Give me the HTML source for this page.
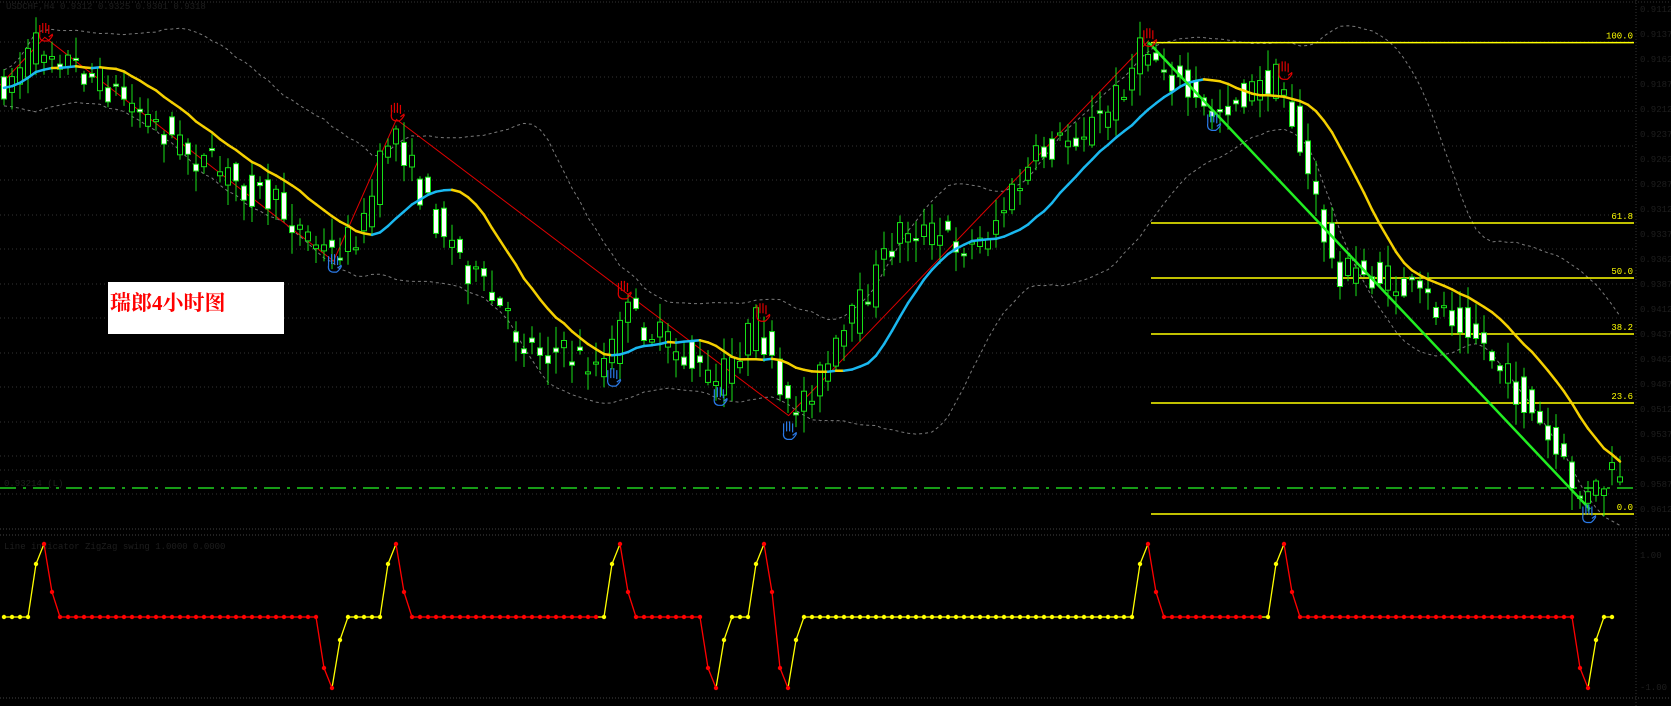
<!DOCTYPE html>
<html><head><meta charset="utf-8">
<style>
html,body{margin:0;padding:0;background:#000;width:1671px;height:706px;overflow:hidden}
#c{position:absolute;left:0;top:0}
.lbl{position:absolute;left:108px;top:282px;width:176px;height:52px;background:#fff;}
.lbl span{position:absolute;left:2px;top:5px;color:#f00;font:bold 21px "Liberation Serif","Noto Serif CJK SC",serif}
</style></head><body>
<svg id="c" width="1671" height="706" xmlns="http://www.w3.org/2000/svg"></svg>
<div class="lbl"><span>瑞郎4小时图</span></div>
<script>
var S=1.0657,svg=document.getElementById('c'),out=[];
function add(s){out.push(s);}
var grids=[42,77,111,146,180,215,249,284,318,353,387,422,456,470,494];
grids.forEach(function(y){add('<line x1="0" y1="'+y+'" x2="1636" y2="'+y+'" stroke="#333" stroke-dasharray="1,3"/>');});
add('<line x1="0" y1="529" x2="1671" y2="529" stroke="#444" stroke-dasharray="1,2"/>');
add('<line x1="0" y1="535" x2="1671" y2="535" stroke="#444" stroke-dasharray="1,2"/>');
add('<line x1="0" y1="698" x2="1671" y2="698" stroke="#444" stroke-dasharray="1,2"/>');
add('<line x1="0" y1="2" x2="1671" y2="2" stroke="#333" stroke-dasharray="1,2"/>');
add('<line x1="1636" y1="0" x2="1636" y2="706" stroke="#333" stroke-dasharray="1,2"/>');
add('<line x1="0" y1="488" x2="1636" y2="488" stroke="#1fd01f" stroke-width="1.5" stroke-dasharray="16,7,3,7"/>');
for(var y=12;y<520;y+=25){add('<text x="1640" y="'+y+'" fill="#1e1e1e" font-family="Liberation Mono" font-size="9">0.9'+(100+y)+'</text>');}
add('<text x="1640" y="558" fill="#1e1e1e" font-family="Liberation Mono" font-size="9">1.00</text>');
add('<text x="1640" y="690" fill="#1e1e1e" font-family="Liberation Mono" font-size="9">-1.00</text>');
add('<text x="6" y="9" fill="#1e1e1e" font-family="Liberation Mono" font-size="9">USDCHF,H4 0.9312 0.9325 0.9301 0.9318</text>');
add('<text x="4" y="486" fill="#1e1e1e" font-family="Liberation Mono" font-size="9">0.93214 (L)</text>');
add('<text x="4" y="549" fill="#1e1e1e" font-family="Liberation Mono" font-size="9">Line indicator ZigZag swing 1.0000 0.0000</text>');
var K=[[0,88],[42,40],[120,92],[190,150],[260,190],[313,240],[345,212],[372,115],[400,185],[450,262],[495,322],[575,345],[585,290],[640,330],[675,362],[715,300],[740,392],[780,345],[850,212],[920,232],[980,145],[1040,110],[1078,42],[1135,108],[1205,72],[1255,252],[1300,262],[1380,300],[1440,388],[1490,472],[1518,445]];
K=K.map(function(p){return [p[0]*S,p[1]*S];});
function P(x){if(x<=K[0][0])return K[0][1];for(var i=1;i<K.length;i++){if(x<=K[i][0]){var a=K[i-1],b=K[i];return a[1]+(b[1]-a[1])*(x-a[0])/(b[0]-a[0]);}}return K[K.length-1][1];}
var seed=7;function R(){seed=(seed*16807)%2147483647;return seed/2147483647;}
var N=203,bars=[];
for(var i=0;i<N;i++){var x=i*8+4;var o=P(x-4)+(R()-0.5)*34,c=P(x+4)+(R()-0.5)*34;
var h=Math.min(o,c)-R()*20-2,l=Math.max(o,c)+R()*20+2;bars.push({x:x,o:o,c:c,h:h,l:l});}
var ma=[],up=[],dn=[];
for(var i=0;i<N;i++){var s=0,n=0;for(var j=Math.max(0,i-11);j<=i;j++){s+=(bars[j].o+bars[j].c)/2;n++;}var m=s/n;ma.push(m);
var s2=0,n2=0,ss=0;for(var j=Math.max(0,i-19);j<=i;j++){var v=(bars[j].o+bars[j].c)/2;s2+=v;ss+=v*v;n2++;}var mean=s2/n2,sd=Math.sqrt(Math.max(0,ss/n2-mean*mean));
up.push(mean-1.5*sd-18);dn.push(mean+1.5*sd+18);}
function pl(arr,col,extra){var p=arr.map(function(v,i){return (i*8+4)+','+v.toFixed(1);}).join(' ');add('<polyline points="'+p+'" fill="none" stroke="'+col+'" '+extra+'/>');}
pl(up,'#7a7a7a','stroke-dasharray="3,3"');pl(dn,'#7a7a7a','stroke-dasharray="3,3"');
var zz=[[0,80],[42,35],[313,245],[372,112],[740,390],[1078,38]].map(function(p){return p[0]*S+','+p[1]*S;}).join(' ');
add('<polyline points="'+zz+'" fill="none" stroke="#e00000" stroke-width="1"/>');
var fib=[[100,42.6],[61.8,223],[50,278],[38.2,334],[23.6,403],[0,514]];
fib.forEach(function(f){add('<line x1="1151" y1="'+f[1]+'" x2="1634" y2="'+f[1]+'" stroke="#ffff00" stroke-width="1.5"/>');
add('<text x="1633" y="'+(f[1]-4)+'" fill="#ffff00" text-anchor="end" font-family="Liberation Mono" font-size="9">'+f[0].toFixed(1)+'</text>');});
bars.forEach(function(b){var bear=b.c>b.o;var t=Math.min(b.o,b.c),h=Math.max(2,Math.abs(b.c-b.o));
add('<line x1="'+b.x+'" y1="'+b.h.toFixed(1)+'" x2="'+b.x+'" y2="'+b.l.toFixed(1)+'" stroke="#17e017"/>');
add('<rect x="'+(b.x-2.5)+'" y="'+t.toFixed(1)+'" width="5" height="'+h.toFixed(1)+'" fill="'+(bear?'#fff':'#000')+'" stroke="#17e017" stroke-width="1"/>');});
for(var i=1;i<N;i++){var col=ma[i]<ma[i-1]-0.3?'#1ab8f0':'#f5d000';
add('<line x1="'+((i-1)*8+4)+'" y1="'+ma[i-1].toFixed(1)+'" x2="'+(i*8+4)+'" y2="'+ma[i].toFixed(1)+'" stroke="'+col+'" stroke-width="2.5" stroke-linecap="round"/>');}
add('<line x1="'+1078*S+'" y1="'+40*S+'" x2="'+1492*S+'" y2="'+478*S+'" stroke="#22ee22" stroke-width="2.5"/>');
function hand(x,y,col){add('<g transform="translate('+x+','+y+')" fill="none" stroke="'+col+'" stroke-width="1.2"><path d="M-5,2 L-5,-7 M-2,1 L-2,-9 M1,1 L1,-9 M4,2 L4,-7 M-5,2 Q-6,8 -1,9 L3,9 Q6,7 8,3 M4,5 L8,2"/></g>');}
[[42,30],[372,105],[585,272],[715,293],[1078,35],[1205,66]].forEach(function(p){hand(p[0]*S,p[1]*S,'#e00000');});
[[313,245],[575,352],[675,370],[740,402],[1138,112],[1490,480]].forEach(function(p){hand(p[0]*S,p[1]*S+2,'#2a7ae8');});
var flat=617,hi=544,lo=688,vals=[],cols=[];
var peaks=[42,372,585,715,1078,1205].map(function(x){return Math.round((x*S-4)/8);});
var troughs=[313,573,675,740,1490].map(function(x){return Math.round((x*S-4)/8);});
for(var i=0;i<N;i++){vals.push(flat);cols.push('#ffff00');}
var ev=[];peaks.forEach(function(p){ev.push([p,1]);});troughs.forEach(function(p){ev.push([p,-1]);});ev.sort(function(a,b){return a[0]-b[0];});
function set(i,v,c){if(i>=0&&i<N){vals[i]=v;cols[i]=c;}}
ev.forEach(function(e){var p=e[0];if(e[1]>0){set(p-2,flat,'#ffff00');set(p-1,hi+20,'#ffff00');set(p,hi,'#ff0000');set(p+1,hi+48,'#ff0000');for(var k=p+2;k<N;k++)cols[k]='#ff0000';}
else{set(p-1,lo-20,'#ff0000');set(p,lo,'#ff0000');set(p+1,lo-48,'#ffff00');for(var k=p+2;k<N;k++)cols[k]='#ffff00';}});
var M=Math.min(N,202);
for(var i=1;i<M;i++){var c=(vals[i]<vals[i-1])?'#ffff00':(vals[i]>vals[i-1]?'#ff0000':cols[i]);
add('<line x1="'+((i-1)*8+4)+'" y1="'+vals[i-1]+'" x2="'+(i*8+4)+'" y2="'+vals[i]+'" stroke="'+c+'" stroke-width="1.3"/>');}
for(var i=0;i<M;i++){add('<circle cx="'+(i*8+4)+'" cy="'+vals[i]+'" r="2.2" fill="'+cols[i]+'"/>');}
svg.innerHTML=out.join('');
</script>
</body></html>
